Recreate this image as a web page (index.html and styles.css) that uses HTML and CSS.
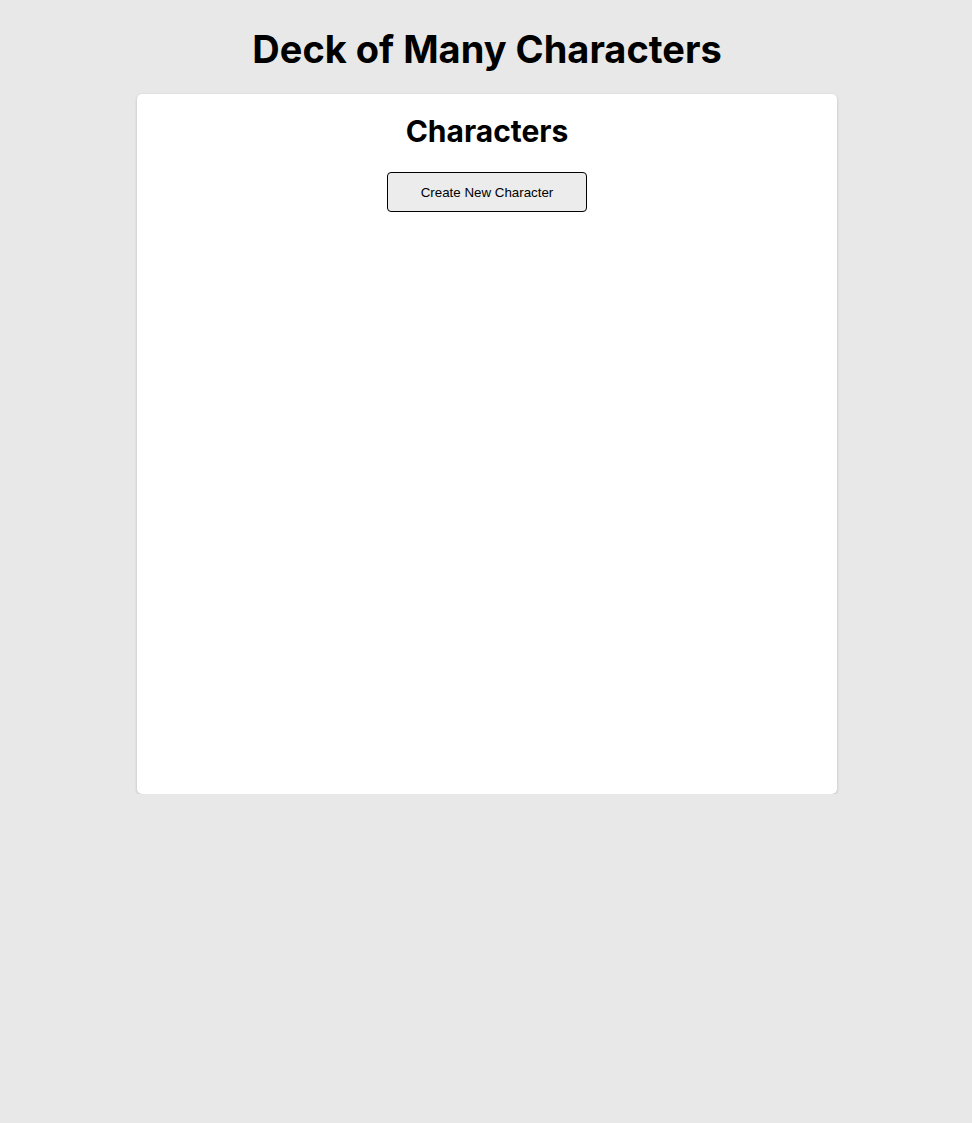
FILE: index.html
```html
<!DOCTYPE html>
<html lang="en">
<head>
<meta charset="utf-8">
<title>Deck of Many Characters</title>
<link rel="stylesheet" href="styles.css">
</head>
<body>
<main class="app">
  <h1 class="app-title">Deck of Many Characters</h1>
  <section class="card">
    <h2 class="card-title">Characters</h2>
    <button class="btn" type="button">Create New Character</button>
  </section>
</main>
</body>
</html>
```

FILE: styles.css
```css
html, body {
  margin: 0;
  padding: 0;
}
body {
  background: #e8e8e8;
  font-family: Inter, "Noto Sans", sans-serif;
  color: #000;
}
.app {
  display: flex;
  flex-direction: column;
  align-items: center;
  padding-left: 2px;
}
.app-title {
  font-size: 38px;
  font-weight: 700;
  line-height: 46px;
  margin: 26px 0 22px;
}
.card {
  box-sizing: border-box;
  width: 700px;
  height: 700px;
  background: #fff;
  border-radius: 5px;
  box-shadow: 0 1px 3px rgba(0, 0, 0, 0.2);
  padding: 19px 20px 20px;
  display: flex;
  flex-direction: column;
  align-items: center;
}
.card-title {
  font-size: 30px;
  font-weight: 700;
  line-height: 36px;
  margin: 0 0 23px;
}
.btn {
  width: 200px;
  height: 40px;
  font-family: "Liberation Sans", Arial, sans-serif;
  font-size: 13.33px;
  color: #000;
  background: #ececec;
  border: 1px solid #000;
  border-radius: 4px;
  padding: 0;
}
```
